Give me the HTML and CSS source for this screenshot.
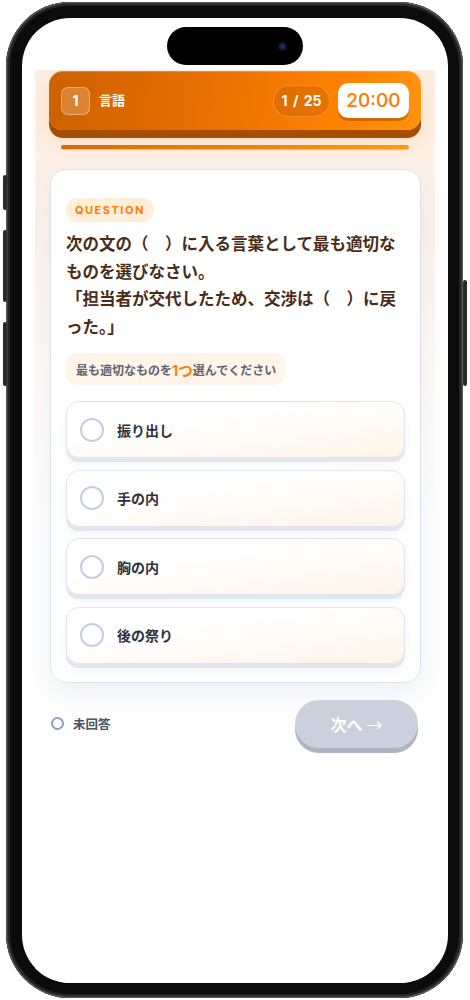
FILE: index.html
```html
<!DOCTYPE html>
<html lang="ja">
<head>
<meta charset="utf-8">
<title>Quiz</title>
<link rel="stylesheet" href="styles.css">
</head>
<body>
<div class="phone">
  <span class="btn btn-action"></span>
  <span class="btn btn-vol-up"></span>
  <span class="btn btn-vol-down"></span>
  <span class="btn btn-power"></span>
  <div class="screen">
    <div class="island"><span class="lens"></span></div>
    <div class="app">
      <header class="topbar">
        <div class="section">
          <span class="section-num">1</span>
          <span class="section-name">言語</span>
        </div>
        <div class="status">
          <span class="count">1 / 25</span>
          <span class="timer">20:00</span>
        </div>
      </header>
      <div class="progress"><div class="progress-fill" style="width:100%"></div></div>

      <section class="card">
        <span class="tag">QUESTION</span>
        <p class="question">次の文の（　）に入る言葉として最も適切なものを選びなさい。<br>「担当者が交代したため、交渉は（　）に戻った。」</p>
        <div class="hint">最も適切なものを<span class="hint-em">1つ</span>選んでください</div>
        <ul class="options">
          <li class="option"><span class="radio"></span><span class="option-text">振り出し</span></li>
          <li class="option"><span class="radio"></span><span class="option-text">手の内</span></li>
          <li class="option"><span class="radio"></span><span class="option-text">胸の内</span></li>
          <li class="option"><span class="radio"></span><span class="option-text">後の祭り</span></li>
        </ul>
      </section>

      <div class="footer">
        <div class="answer-state"><span class="ring"></span><span>未回答</span></div>
        <button class="next" type="button">次へ <span class="arrow">→</span></button>
      </div>
    </div>
  </div>
</div>
</body>
</html>
```
FILE: styles.css
```css
* { box-sizing: border-box; }
html, body { margin: 0; padding: 0; background: #ffffff; }
body {
  width: 470px;
  height: 1000px;
  overflow: hidden;
  font-family: Inter, "Noto Sans CJK JP", sans-serif;
}

.phone {
  position: relative;
  width: 457px;
  height: 996px;
  margin: 2px 0 0 6px;
  padding: 16px 15px 15px 16px;
  border-radius: 64px;
  background: #0b0b0b;
  box-shadow: inset 0 0 0 1.5px #555555, inset 0 0 0 4px #242424;
}

.btn {
  position: absolute;
  width: 4px;
  background: #2a2a2a;
  border-radius: 2px;
}
.btn-action { left: -3px; top: 173px; height: 35px; }
.btn-vol-up { left: -3px; top: 228px; height: 72px; }
.btn-vol-down { left: -3px; top: 320px; height: 64px; }
.btn-power { right: -4px; top: 278px; height: 106px; }

.screen {
  position: relative;
  height: 100%;
  border-radius: 48px;
  background: #ffffff;
  overflow: hidden;
}

.island {
  position: absolute;
  left: 145px;
  top: 9px;
  width: 136px;
  height: 38px;
  border-radius: 19px;
  background: #000000;
}
.lens {
  position: absolute;
  right: 16px;
  top: 15px;
  width: 9px;
  height: 9px;
  border-radius: 50%;
  background: radial-gradient(circle at 50% 50%, #1c3a78 0, #0d1424 60%, #05070c 100%);
}

.app {
  margin: 52px 13px 0;
  padding: 1px 14px 0;
  height: 913px;
  background: linear-gradient(to bottom, #fdeee0 0, #fdf3ea 160px, #fefaf6 300px, #ffffff 460px);
}

.topbar {
  display: flex;
  align-items: center;
  justify-content: space-between;
  height: 59px;
  padding: 0 12px;
  border-radius: 14px;
  background: linear-gradient(100deg, #cc6100 0%, #e66f00 40%, #ff8200 78%, #ff9410 100%);
  box-shadow: inset 0 1px 0 rgba(255, 200, 140, 0.35), 0 8px 0 #a64d00, 0 12px 22px rgba(240, 130, 40, 0.18);
}
.section { display: flex; align-items: center; gap: 9px; }
.section-num {
  display: flex;
  align-items: center;
  justify-content: center;
  width: 29px;
  height: 28px;
  border-radius: 7px;
  background: rgba(255, 255, 255, 0.2);
  border: 1px solid rgba(255, 255, 255, 0.35);
  color: #ffffff;
  font-size: 14px;
  font-weight: 700;
}
.section-name {
  color: #ffffff;
  font-size: 13px;
  font-weight: 700;
  line-height: 1;
}
.status { display: flex; align-items: center; gap: 8px; }
.count {
  display: flex;
  align-items: center;
  justify-content: center;
  width: 57px;
  height: 32px;
  border-radius: 16px;
  background: rgba(120, 50, 0, 0.16);
  border: 1px solid rgba(255, 200, 150, 0.35);
  color: #ffffff;
  font-size: 14px;
  font-weight: 700;
  word-spacing: 2px;
  white-space: pre;
}
.timer {
  display: flex;
  align-items: center;
  justify-content: center;
  width: 71px;
  height: 35px;
  border-radius: 10px;
  background: #ffffff;
  color: #ff7a00;
  font-size: 19px;
  font-weight: 500;
  box-shadow: 0 3px 0 rgba(170, 80, 0, 0.55);
}

.progress {
  margin: 15px 12px 0;
  height: 4px;
  border-radius: 2px;
  background: #f3d9c0;
  box-shadow: 0 1px 0 rgba(130, 150, 210, 0.45);
}
.progress-fill {
  height: 100%;
  border-radius: 2px;
  background: linear-gradient(90deg, #d86900, #ff9a10);
}

.card {
  margin: 20px 0 0 1px;
  padding: 28px 15px 18px;
  border: 1px solid #dde3ef;
  border-radius: 16px;
  background: #ffffff;
  box-shadow: 0 12px 30px rgba(150, 160, 190, 0.16);
}
.tag {
  display: inline-block;
  height: 24px;
  padding: 0 9px;
  border-radius: 12px;
  background: #ffefd9;
  color: #ff7a00;
  font-size: 11px;
  font-weight: 700;
  line-height: 24px;
  letter-spacing: 1.5px;
}
.question {
  margin: 9px 0 0;
  color: #4b2d17;
  font-size: 16.5px;
  font-weight: 700;
  line-height: 27.5px;
  line-break: normal;
}
.hint {
  display: inline-flex;
  align-items: center;
  height: 32px;
  margin-top: 12px;
  padding: 0 9px 0 10px;
  border-radius: 10px;
  background: #fff4e8;
  color: #5d6476;
  font-size: 12px;
  font-weight: 700;
}
.hint-em {
  color: #ff7f0a;
  font-size: 14.5px;
}

.options {
  list-style: none;
  margin: 16px 0 0;
  padding: 0;
  display: flex;
  flex-direction: column;
  gap: 11.5px;
}
.option {
  display: flex;
  align-items: center;
  gap: 13px;
  height: 57px;
  padding: 0 13px;
  border: 1px solid #dfe4ef;
  border-radius: 13px;
  background: linear-gradient(172deg, #ffffff 35%, #fff4e8 100%);
  box-shadow: 0 4px 0 #e0e5ee, 0 6px 10px rgba(160, 170, 200, 0.12);
}
.radio {
  width: 24px;
  height: 24px;
  border-radius: 50%;
  border: 2.5px solid #c4cee2;
  background: #ffffff;
  flex: none;
}
.option-text {
  color: #2d323e;
  font-size: 14px;
  font-weight: 700;
}

.footer {
  display: flex;
  align-items: center;
  justify-content: space-between;
  margin-top: 17px;
  padding: 0 3px 0 2px;
}
.answer-state {
  display: flex;
  align-items: center;
  gap: 9px;
  color: #4d5363;
  font-size: 12.5px;
  font-weight: 700;
}
.ring {
  width: 13px;
  height: 13px;
  border-radius: 50%;
  border: 2.5px solid #8e9cc8;
}
.next {
  width: 123px;
  height: 48px;
  border: 0;
  border-radius: 24px;
  background: #cad0dc;
  color: #ffffff;
  font-family: inherit;
  font-size: 16px;
  font-weight: 700;
  box-shadow: 0 5px 0 #adb4c3;
}
.arrow {
  font-family: "Noto Sans CJK JP", sans-serif;
  font-weight: 400;
}
```
